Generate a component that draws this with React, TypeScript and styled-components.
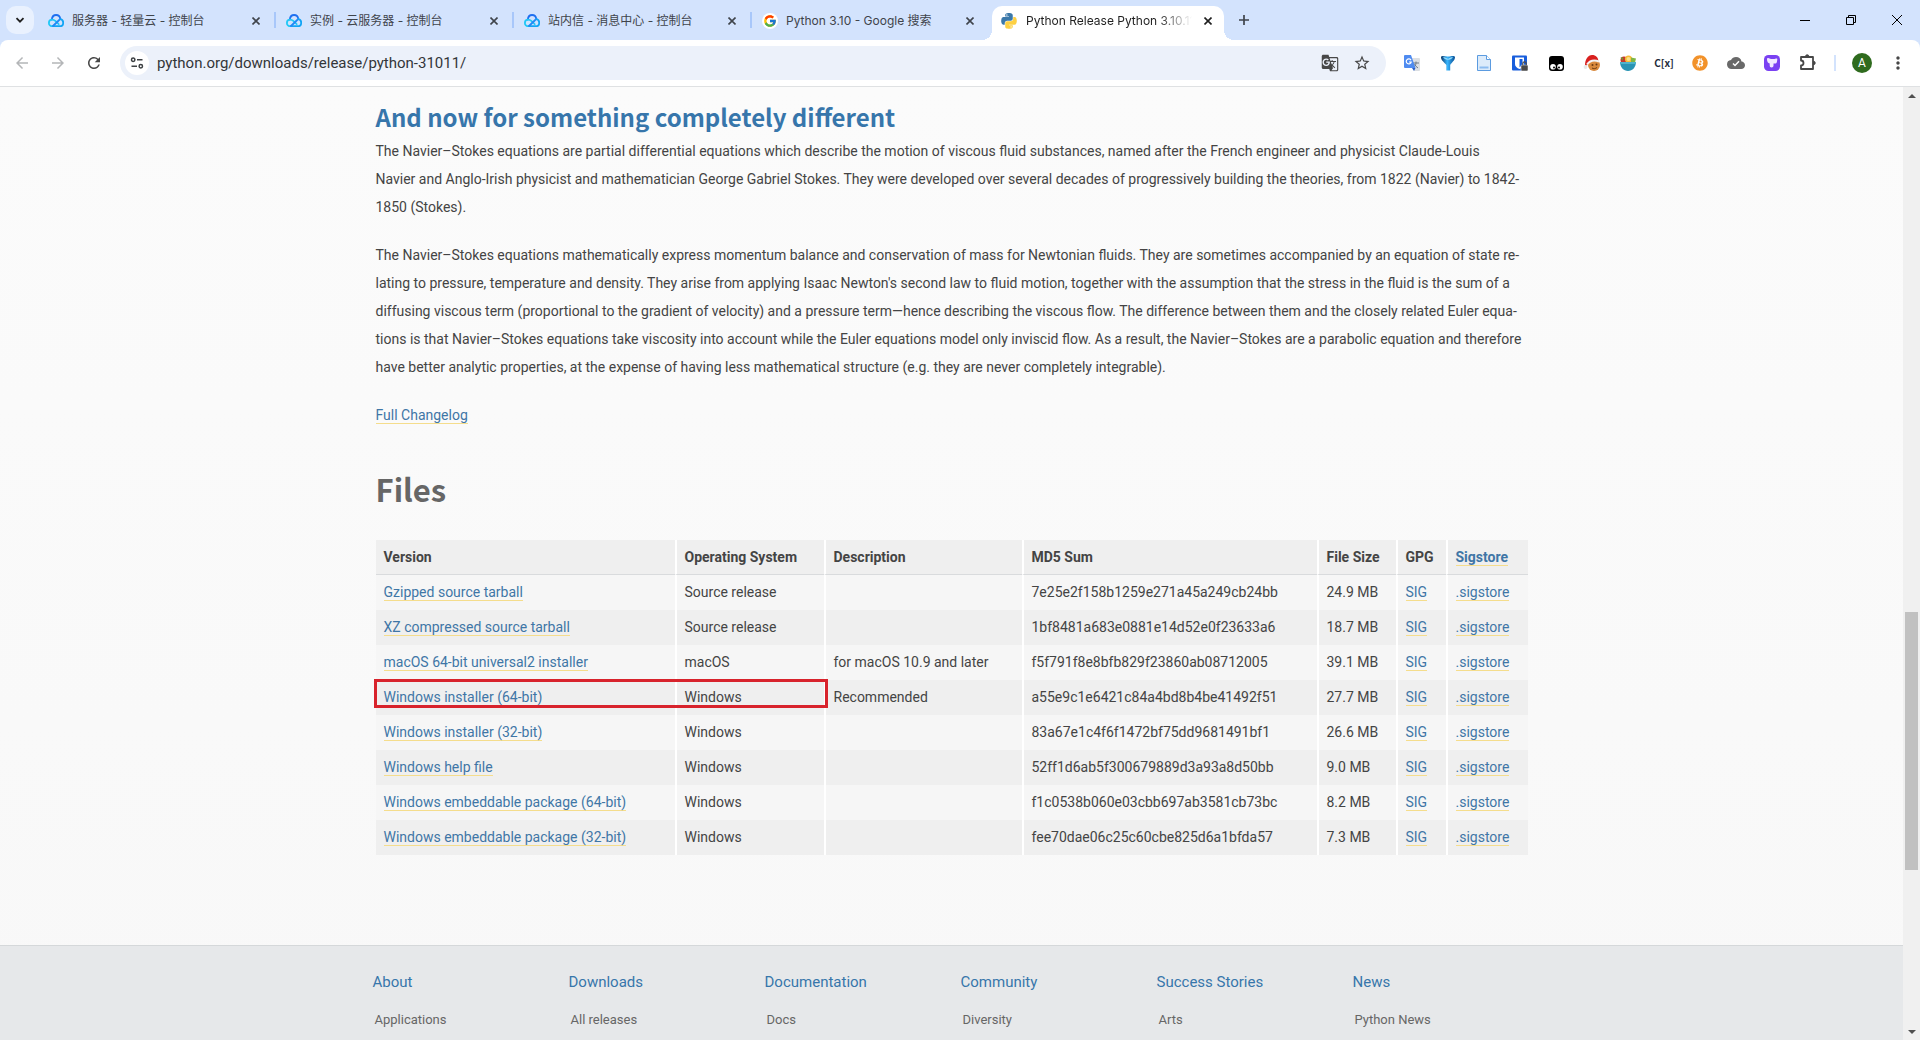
import React from "react";
import styled, { createGlobalStyle } from "styled-components";
import {
  MdArrowBack,
  MdArrowForward,
  MdCloud,
  MdGTranslate,
  MdMoreVert,
  MdRefresh,
  MdStarBorder,
} from "react-icons/md";
import { FcGoogle } from "react-icons/fc";
import { FaBitcoin } from "react-icons/fa";

const uiFont = `Inter, "Noto Sans CJK SC", sans-serif`;
const bodyFont = `Roboto, "Noto Sans CJK SC", sans-serif`;
const headingFont = `"Noto Sans CJK SC", "Noto Sans", sans-serif`;

const GlobalStyle = createGlobalStyle`
  * { box-sizing: border-box; }
  body { margin: 0; background: #fafafa; }
  button { border: 0; padding: 0; margin: 0; background: none; color: inherit; font: inherit; cursor: pointer; }
  svg { display: block; flex: none; }
`;

const Window = styled.div`
  display: flex;
  flex-direction: column;
  height: 100vh;
  overflow: hidden;
  background: #d3e3fd;
  font-family: ${uiFont};
`;

/* ---------- tab strip ---------- */

const TabStrip = styled.header`
  display: flex;
  align-items: flex-end;
  height: 40px;
  flex: none;
  padding-left: 6px;
`;

const TabSearch = styled.button`
  display: grid;
  place-items: center;
  width: 28px;
  height: 28px;
  margin: 0 6px 6px 0;
  border-radius: 10px;
  background: #e9f1fe;
  color: #1f1f1f;
`;

const TabList = styled.div`
  display: flex;
  gap: 6px;
`;

const Tab = styled.div<{ $active?: boolean; $divider?: boolean }>`
  position: relative;
  display: flex;
  align-items: center;
  gap: 8px;
  width: 232px;
  height: 34px;
  padding: 0 8px 4px;
  border-radius: 10px 10px 0 0;
  background: ${(p) => (p.$active ? "#fff" : "transparent")};
  color: ${(p) => (p.$active ? "#1f1f1f" : "#3f444b")};

  &::before,
  &::after {
    content: "";
    display: ${(p) => (p.$active ? "block" : "none")};
    position: absolute;
    bottom: 0;
    width: 10px;
    height: 10px;
  }
  &::before {
    left: -10px;
    background: radial-gradient(circle at 0 0, transparent 10px, #fff 10px);
  }
  &::after {
    right: -10px;
    background: radial-gradient(circle at 100% 0, transparent 10px, #fff 10px);
  }
  ${(p) =>
    p.$divider &&
    `&::after {
      display: block;
      right: -4px;
      bottom: 12px;
      width: 2px;
      height: 16px;
      background: #a8c7fa;
    }`}
`;

const TabTitle = styled.button<{ $fade?: boolean }>`
  flex: 1;
  min-width: 0;
  overflow: hidden;
  white-space: nowrap;
  text-align: left;
  font-size: 12px;
  line-height: 20px;
  mask-image: ${(p) => (p.$fade ? "linear-gradient(to right, #000 80%, transparent)" : "none")};
`;

const TabClose = styled.button`
  display: grid;
  place-items: center;
  width: 16px;
  height: 16px;
`;

const NewTab = styled.button`
  display: grid;
  place-items: center;
  width: 28px;
  height: 28px;
  margin: 0 0 6px 6px;
  color: #3f444b;
`;

const WindowControls = styled.div`
  display: flex;
  margin-left: auto;
  align-self: stretch;
`;

const WindowButton = styled.button`
  display: grid;
  place-items: center;
  width: 46px;
  height: 40px;
`;

/* ---------- toolbar ---------- */

const Toolbar = styled.div`
  display: flex;
  align-items: center;
  flex: none;
  height: 47px;
  padding: 0 4px;
  border-bottom: 1px solid #dfe1e3;
  border-radius: 8px 8px 0 0;
  background: #fff;
`;

const ToolButton = styled.button<{ $muted?: boolean }>`
  display: grid;
  place-items: center;
  flex: none;
  width: 36px;
  height: 34px;
  color: ${(p) => (p.$muted ? "#b4b6b8" : "#474747")};
`;

const Omnibox = styled.form`
  display: flex;
  align-items: center;
  flex: 1;
  min-width: 0;
  height: 34px;
  margin: 0 8px;
  padding: 0 8px 0 5px;
  border-radius: 17px;
  background: #ecf1fa;
`;

const SiteInfo = styled.button`
  display: grid;
  place-items: center;
  width: 24px;
  height: 24px;
  border-radius: 50%;
  background: #fff;
`;

const Address = styled.input`
  flex: 1;
  min-width: 0;
  border: 0;
  outline: 0;
  padding: 0 8px;
  background: transparent;
  color: #333639;
  font: 15px/20px ${bodyFont};
`;

const OmniButton = styled.button`
  display: grid;
  place-items: center;
  width: 32px;
  height: 32px;
  color: #474747;
`;

const ToolDivider = styled.span`
  width: 2px;
  height: 16px;
  margin: 0 8px;
  background: #d3e3fd;
`;

const Avatar = styled.span`
  display: grid;
  place-items: center;
  width: 20px;
  height: 20px;
  border-radius: 50%;
  background: #2f6b1e;
  color: #fff;
  font: 12px/20px ${bodyFont};
`;

const FormulaMark = styled.span`
  color: #1d2b3a;
  font: 700 10px/16px ${headingFont};
`;

/* ---------- page ---------- */

const Viewport = styled.div`
  display: flex;
  flex: 1;
  min-height: 0;
`;

const Page = styled.div`
  flex: 1;
  min-width: 0;
  overflow: hidden;
  background: linear-gradient(#fbfbfb, #f8f8f8);
  color: #444;
  font: 14px/28px ${bodyFont};
`;

const Article = styled.main`
  max-width: 1152px;
  margin: 0 auto;
  padding: 14px 0 90px;
`;

const SubHeading = styled.h2`
  margin: 0 0 4px;
  color: #3776ab;
  font: 700 24px/32px ${headingFont};
`;

const Paragraph = styled.p`
  margin: 0 0 20px;
`;

const FilesHeading = styled.h1`
  margin: 40px 0 31px;
  color: #666;
  font: 700 31px/40px ${headingFont};
`;

const Link = styled.a`
  border-bottom: 1px solid #f5dd8c;
  color: #3f76a6;
  text-decoration: none;
`;

const FilesTable = styled.table`
  width: 100%;
  border-collapse: separate;
  border-spacing: 0;
  table-layout: fixed;
  line-height: 20px;
`;

const Col = styled.col<{ $width?: number }>`
  width: ${(p) => (p.$width ? `${p.$width}px` : "auto")};
`;

const HeadCell = styled.th`
  height: 35px;
  padding: 0 8px;
  border-bottom: 1px solid #d9dbdd;
  background: #efefef;
  text-align: left;
  font-weight: 700;
  white-space: nowrap;

  & + & {
    border-left: 2px solid #fff;
  }
`;

const Cell = styled.td`
  position: relative;
  height: 35px;
  padding: 0 8px 2px;
  white-space: nowrap;

  & + & {
    border-left: 2px solid #fff;
  }
`;

const Row = styled.tr`
  background: #f6f6f6;

  &:nth-child(even) {
    background: #efefef;
  }
`;

const Highlight = styled.span`
  position: absolute;
  z-index: 1;
  top: -1px;
  left: -2px;
  width: calc(100% + 155px);
  height: 29px;
  border: 3px solid #d8232c;
  pointer-events: none;
`;

const Footer = styled.footer`
  min-height: 300px;
  padding-top: 24px;
  border-top: 1px solid #d5d8da;
  background: #e6e8ea;
`;

const SiteMap = styled.nav`
  display: grid;
  grid-template-columns: repeat(6, 1fr);
  max-width: 1176px;
  margin: 0 auto;
`;

const SiteColumn = styled.div`
  display: flex;
  flex-direction: column;
  align-items: flex-start;
  gap: 16px;
  padding-left: 9px;
`;

const SiteTitle = styled.a`
  color: #3776ab;
  font-size: 15px;
  line-height: 24px;
  text-decoration: none;
`;

const SiteLink = styled.a`
  padding-left: 2px;
  color: #666;
  font-size: 13px;
  line-height: 20px;
  text-decoration: none;
`;

/* ---------- scroll bar ---------- */

const ScrollBar = styled.div`
  display: flex;
  flex-direction: column;
  flex: none;
  width: 17px;
  background: #f0f0f0;
`;

const ScrollButton = styled.button`
  display: grid;
  place-items: center;
  height: 17px;
`;

const ScrollSpace = styled.div<{ $grow: number }>`
  flex: ${(p) => p.$grow} 0 0;
`;

const ScrollThumb = styled.div`
  flex: 258 0 0;
  margin: 0 2px;
  background: #c1c1c1;
`;

/* ---------- drawings ---------- */

const CloudLogo = () => (
  <svg width="16" height="16" viewBox="0 0 16 16" fill="none" strokeWidth="1.8" strokeLinecap="round">
    <path d="M3.8 6.6C4.1 3.6 6 2 8.1 2c2.2 0 3.9 1.5 4.2 3.9" stroke="#1f6ff0" />
    <path d="M12 6.2c1.9.2 3.2 1.7 3.2 3.5 0 2-1.5 3.5-3.5 3.5H4.6" stroke="#12a5f5" />
    <path d="M4.500 13.200C2.400 13.200.9 11.800.9 9.900c0-1.900 1.500-3.300 3.400-3.300 1.300 0 2.100.5 3 1.300l3.400 3.200" stroke="#21c8f6" />
    <path d="M5 13l6.200-6" stroke="#2388f5" />
  </svg>
);

const PythonLogo = () => (
  <svg width="18" height="18" viewBox="5 -1 118 110">
    <path
      fill="#3b78a9"
      d="M63.391 1.988c-4.222.02-8.252.379-11.8 1.007-10.45 1.846-12.346 5.71-12.346 12.837v9.411h24.693v3.137H29.977c-7.176 0-13.46 4.313-15.426 12.521-2.268 9.405-2.368 15.275 0 25.096 1.755 7.311 5.947 12.519 13.124 12.519h8.491V67.234c0-8.151 7.051-15.34 15.426-15.34h24.665c6.866 0 12.346-5.654 12.346-12.548V15.833c0-6.693-5.646-11.72-12.346-12.837-4.244-.706-8.645-1.027-12.866-1.008zM50.037 9.557c2.55 0 4.634 2.117 4.634 4.721 0 2.593-2.083 4.69-4.634 4.69-2.56 0-4.633-2.097-4.633-4.69-.001-2.604 2.073-4.721 4.633-4.721z"
    />
    <path
      fill="#fdd042"
      d="M91.682 28.38v10.966c0 8.5-7.208 15.655-15.426 15.655H51.591c-6.756 0-12.346 5.783-12.346 12.549v23.515c0 6.691 5.818 10.628 12.346 12.547 7.816 2.297 15.312 2.713 24.665 0 6.216-1.801 12.346-5.423 12.346-12.547v-9.412H63.938v-3.138h37.012c7.176 0 9.852-5.005 12.348-12.519 2.578-7.735 2.467-15.174 0-25.096-1.774-7.145-5.161-12.521-12.348-12.521h-9.268zM77.809 87.927c2.561 0 4.634 2.097 4.634 4.692 0 2.602-2.074 4.719-4.634 4.719-2.55 0-4.633-2.117-4.633-4.719 0-2.595 2.083-4.692 4.633-4.692z"
    />
  </svg>
);

const GoogleLogo = () => (
  <svg width="16" height="16" viewBox="0 0 16 16">
    <circle cx="8" cy="8" r="8" fill="#fff" />
    <FcGoogle x="1" y="1" size={14} />
  </svg>
);

const CrossIcon = () => (
  <svg width="8" height="8" viewBox="0 0 8 8" stroke="currentColor" strokeWidth="1.6">
    <path d="M.5.5l7 7M7.5.5l-7 7" />
  </svg>
);

const ChevronIcon = () => (
  <svg width="10" height="10" viewBox="0 0 10 10" fill="none" stroke="currentColor" strokeWidth="1.8">
    <path d="M1.500 3.200L5 6.700l3.500-3.500" />
  </svg>
);

const PlusIcon = () => (
  <svg width="12" height="12" viewBox="0 0 12 12" stroke="currentColor" strokeWidth="1.7">
    <path d="M6 1v10M1 6h10" />
  </svg>
);

const TuneIcon = () => (
  <svg width="14" height="14" viewBox="0 0 14 14" fill="none" stroke="#3c4043" strokeWidth="1.5">
    <circle cx="3.2" cy="3.8" r="1.7" />
    <path d="M7 3.800h5.500M1.500 10.200H7" />
    <circle cx="10.8" cy="10.2" r="1.7" />
  </svg>
);

const TranslateExt = () => (
  <svg width="18" height="18" viewBox="0 0 18 18">
    <path d="M8 4h8a1 1 0 0 1 1 1v11a1 1 0 0 1-1 1h-5z" fill="#dcdfe3" />
    <path d="M10 9h6M13 7.500V9c0 2-1.500 4-3 5m1.500-4c.8 1.800 2 3 3.500 4" stroke="#6f7b88" fill="none" />
    <path d="M2 1h6l4.500 13H2a1 1 0 0 1-1-1V2a1 1 0 0 1 1-1z" fill="#4f8bf0" />
    <path d="M11 17l-2-3h3.500z" fill="#2b5fc4" />
    <path d="M8 6.300A2.500 2.500 0 1 0 8.200 8H6" stroke="#fff" strokeWidth="1.2" fill="none" />
  </svg>
);

const FunnelExt = () => (
  <svg width="16" height="18" viewBox="0 0 16 18">
    <defs>
      <linearGradient id="funnel">
        <stop offset="0" stopColor="#0b3566" />
        <stop offset=".45" stopColor="#38b6ff" />
        <stop offset="1" stopColor="#0a4f94" />
      </linearGradient>
    </defs>
    <path
      d="M1 3.200C1 1.400 4 1.800 8 2.600c4-.8 7-1.200 7 .6 0 3-3.300 5.300-4.800 7.800V16.500H6.400V11C4.500 8.500 1 6.200 1 3.200z"
      fill="url(#funnel)"
    />
    <path d="M3 3.200c2 0 3.800.6 5 1.800 1.200-1.200 3-1.800 5-1.800-1.500 1.800-3.500 2.600-5 2.600S4.500 5 3 3.200z" fill="#8fdcff" />
  </svg>
);

const PageExt = () => (
  <svg width="14" height="16" viewBox="0 0 14 16" fill="#dcebfa" stroke="#5b9be0">
    <path d="M.5.5h9l4 4v11H.5z" />
    <path d="M9.500.5v4h4" fill="#fff" />
    <path d="M2.500 11.500h9v2h-9z" fill="#8dbcf0" stroke="none" />
  </svg>
);

const ShieldExt = () => (
  <svg width="18" height="17" viewBox="0 0 18 17">
    <rect x="1" y="0.5" width="15" height="15" rx="1" fill="#175ddc" />
    <path d="M4 2.500h9v6.500c0 2.500-2 4-4.500 5C6 13 4 11.500 4 9z" fill="#fff" />
    <path d="M8.500 4h3v5c0 1.500-1.500 2.500-3 3.200z" fill="#175ddc" />
    <rect x="10" y="10" width="7" height="6" rx="1" fill="#4a4a4a" stroke="#fff" strokeWidth=".5" />
    <path d="M11.800 10V8.500a1.700 1.700 0 0 1 3.400 0V10" fill="none" stroke="#4a4a4a" strokeWidth="1.2" />
  </svg>
);

const MonkeyExt = () => (
  <svg width="15" height="15" viewBox="0 0 15 15">
    <rect width="15" height="15" rx="3" fill="#000" />
    <circle cx="4" cy="10.8" r="2.8" fill="#fff" />
    <circle cx="11" cy="10.8" r="2.8" fill="#fff" />
    <circle cx="5" cy="11.5" r="1" />
    <circle cx="10" cy="11.5" r="1" />
  </svg>
);

const SantaExt = () => (
  <svg width="18" height="18" viewBox="0 0 18 18">
    <circle cx="11" cy="11" r="6" fill="#d98a3d" />
    <circle cx="9.5" cy="11" r="1" fill="#6b3a12" />
    <circle cx="13.5" cy="10.5" r="1" fill="#6b3a12" />
    <path d="M9 14c1.500 1 3.500.8 5-.5" stroke="#6b3a12" fill="none" />
    <path d="M2 12C2 5 5 1 9 1c4 0 6 2.500 6.500 6C11 5.500 7 7 4.500 11z" fill="#d9201f" />
    <path d="M4 10.500C6.500 7 11 5.500 16 7.500" stroke="#f4f4f4" strokeWidth="2" fill="none" />
    <circle cx="2.5" cy="13" r="1.9" fill="#e8e8e8" />
  </svg>
);

const BowlExt = () => (
  <svg width="18" height="18" viewBox="0 0 18 18">
    <circle cx="5" cy="6" r="3.5" fill="#c8352b" />
    <path d="M1.500 3l3 1-1 3z" fill="#6d9a32" />
    <circle cx="9.5" cy="5" r="3.6" fill="#f6bb36" />
    <circle cx="9.5" cy="5" r="2" fill="#fbe08a" />
    <path d="M12 3.500l5 1-1 4h-4z" fill="#7fb743" />
    <path d="M1 8h16c0 5-3.500 9-8 9s-8-4-8-9z" fill="#2a94b4" />
    <path d="M1 8h16l-.5 2h-15z" fill="#4fb3cc" />
  </svg>
);

const CloudCheckExt = () => (
  <svg width="18" height="18" viewBox="0 0 18 18">
    <MdCloud size={18} color="#696969" />
    <path d="M6 9.500l2 2 4-4.300" stroke="#fff" strokeWidth="1.5" fill="none" />
  </svg>
);

const PurpleExt = () => (
  <svg width="16" height="16" viewBox="0 0 16 16">
    <rect width="16" height="16" rx="4.5" fill="#7a41f2" />
    <path
      d="M3 4.200c0-1 .8-1.400 1.800-1l2.200.9h3.500l1.500-.6c.9-.3 1.500.3 1.300 1.200l-.5 2.500c-.2.900-.8 1.400-1.700 1.400H9.500v1.900c0 1.300-.7 2-1.900 2-1.300 0-1.900-.7-1.900-2V8.500C4 8.200 3 6.500 3 4.200z"
      fill="#f1eaff"
    />
  </svg>
);

const PuzzleIcon = () => (
  <svg width="18" height="20" viewBox="0 0 18 20" fill="none" stroke="#474747" strokeWidth="1.8" strokeLinejoin="round">
    <path d="M2 4h12v12H2v-3.500a2.400 2.400 0 0 0 0-5z" />
    <path d="M6.500 3.500a1.700 1.700 0 0 1 3.400 0zM14.500 8.300a1.700 1.700 0 0 1 0 3.400z" fill="#474747" strokeWidth="1" />
  </svg>
);

const TriangleIcon = ({ down }: { down?: boolean }) => (
  <svg width="8" height="4" viewBox="0 0 8 4" fill="#505050">
    <path d={down ? "M0 0h8L4 4z" : "M0 4h8L4 0z"} />
  </svg>
);

/* ---------- data ---------- */

const tabs = [
  { title: "服务器 - 轻量云 - 控制台", icon: <CloudLogo /> },
  { title: "实例 - 云服务器 - 控制台", icon: <CloudLogo /> },
  { title: "站内信 - 消息中心 - 控制台", icon: <CloudLogo /> },
  { title: "Python 3.10 - Google 搜索", icon: <GoogleLogo /> },
  { title: "Python Release Python 3.10.11", icon: <PythonLogo /> },
];

const extensions: [string, React.ReactNode][] = [
  ["Translate", <TranslateExt />],
  ["Filter", <FunnelExt />],
  ["Notes", <PageExt />],
  ["Passwords", <ShieldExt />],
  ["Scripts", <MonkeyExt />],
  ["Cookies", <SantaExt />],
  ["Bowl", <BowlExt />],
  ["Formula", <FormulaMark>C[x]</FormulaMark>],
  ["Bitcoin", <FaBitcoin size={16} color="#f2922a" />],
  ["Cloud", <CloudCheckExt />],
  ["Wallet", <PurpleExt />],
  ["Extensions", <PuzzleIcon />],
];

const columns: { label: string; width?: number }[] = [
  { label: "Version" },
  { label: "Operating System", width: 149 },
  { label: "Description", width: 198 },
  { label: "MD5 Sum", width: 295 },
  { label: "File Size", width: 79 },
  { label: "GPG", width: 50 },
  { label: "Sigstore", width: 82 },
];

const files = [
  { name: "Gzipped source tarball", os: "Source release", note: "", md5: "7e25e2f158b1259e271a45a249cb24bb", size: "24.9 MB" },
  { name: "XZ compressed source tarball", os: "Source release", note: "", md5: "1bf8481a683e0881e14d52e0f23633a6", size: "18.7 MB" },
  { name: "macOS 64-bit universal2 installer", os: "macOS", note: "for macOS 10.9 and later", md5: "f5f791f8e8bfb829f23860ab08712005", size: "39.1 MB" },
  { name: "Windows installer (64-bit)", os: "Windows", note: "Recommended", md5: "a55e9c1e6421c84a4bd8b4be41492f51", size: "27.7 MB", marked: true },
  { name: "Windows installer (32-bit)", os: "Windows", note: "", md5: "83a67e1c4f6f1472bf75dd9681491bf1", size: "26.6 MB" },
  { name: "Windows help file", os: "Windows", note: "", md5: "52ff1d6ab5f300679889d3a93a8d50bb", size: "9.0 MB" },
  { name: "Windows embeddable package (64-bit)", os: "Windows", note: "", md5: "f1c0538b060e03cbb697ab3581cb73bc", size: "8.2 MB" },
  { name: "Windows embeddable package (32-bit)", os: "Windows", note: "", md5: "fee70dae06c25c60cbe825d6a1bfda57", size: "7.3 MB" },
];

const siteMap = [
  ["About", "Applications"],
  ["Downloads", "All releases"],
  ["Documentation", "Docs"],
  ["Community", "Diversity"],
  ["Success Stories", "Arts"],
  ["News", "Python News"],
];

/* ---------- sections ---------- */

const BrowserTabs = () => (
  <TabStrip>
    <TabSearch aria-label="Search tabs">
      <ChevronIcon />
    </TabSearch>
    <TabList>
      {tabs.map((tab, i) => (
        <Tab key={tab.title} $active={i === 4} $divider={i < 3}>
          {tab.icon}
          <TabTitle $fade={i === 4}>{tab.title}</TabTitle>
          <TabClose aria-label="Close tab">
            <CrossIcon />
          </TabClose>
        </Tab>
      ))}
    </TabList>
    <NewTab aria-label="New tab">
      <PlusIcon />
    </NewTab>
    <WindowControls>
      <WindowButton aria-label="Minimize">
        <svg width="10" height="10" viewBox="0 0 10 10" stroke="#000">
          <path d="M0 5.500h10" />
        </svg>
      </WindowButton>
      <WindowButton aria-label="Restore">
        <svg width="10" height="10" viewBox="0 0 10 10" fill="none" stroke="#000">
          <path d="M.5 2.500h7v7h-7zM2.500 2.500v-2h7v7h-2" />
        </svg>
      </WindowButton>
      <WindowButton aria-label="Close">
        <svg width="10" height="10" viewBox="0 0 10 10" stroke="#000">
          <path d="M0 0l10 10M10 0L0 10" />
        </svg>
      </WindowButton>
    </WindowControls>
  </TabStrip>
);

const BrowserToolbar = () => (
  <Toolbar>
    <ToolButton $muted aria-label="Back">
      <MdArrowBack size={18} />
    </ToolButton>
    <ToolButton $muted aria-label="Forward">
      <MdArrowForward size={18} />
    </ToolButton>
    <ToolButton aria-label="Reload">
      <MdRefresh size={18} />
    </ToolButton>
    <Omnibox>
      <SiteInfo type="button" aria-label="Site information">
        <TuneIcon />
      </SiteInfo>
      <Address aria-label="Address" defaultValue="python.org/downloads/release/python-31011/" />
      <OmniButton type="button" aria-label="Translate this page">
        <MdGTranslate size={18} />
      </OmniButton>
      <OmniButton type="button" aria-label="Bookmark this page">
        <MdStarBorder size={18} />
      </OmniButton>
    </Omnibox>
    {extensions.map(([name, icon]) => (
      <ToolButton key={name} aria-label={name}>
        {icon}
      </ToolButton>
    ))}
    <ToolDivider />
    <ToolButton aria-label="Profile">
      <Avatar>A</Avatar>
    </ToolButton>
    <ToolButton aria-label="Menu">
      <MdMoreVert size={20} />
    </ToolButton>
  </Toolbar>
);

const FilesList = () => (
  <FilesTable>
    <colgroup>
      {columns.map((c) => (
        <Col key={c.label} $width={c.width} />
      ))}
    </colgroup>
    <thead>
      <tr>
        {columns.map((c) => (
          <HeadCell key={c.label} scope="col">
            {c.label === "Sigstore" ? <Link href="#sigstore">{c.label}</Link> : c.label}
          </HeadCell>
        ))}
      </tr>
    </thead>
    <tbody>
      {files.map((f) => (
        <Row key={f.name}>
          <Cell>
            <Link href="#file">{f.name}</Link>
            {f.marked && <Highlight />}
          </Cell>
          <Cell>{f.os}</Cell>
          <Cell>{f.note}</Cell>
          <Cell>{f.md5}</Cell>
          <Cell>{f.size}</Cell>
          <Cell>
            <Link href="#sig">SIG</Link>
          </Cell>
          <Cell>
            <Link href="#sigstore">.sigstore</Link>
          </Cell>
        </Row>
      ))}
    </tbody>
  </FilesTable>
);

export default function App() {
  return (
    <Window>
      <GlobalStyle />
      <BrowserTabs />
      <BrowserToolbar />
      <Viewport>
        <Page>
          <Article>
            <SubHeading>And now for something completely different</SubHeading>
            <Paragraph>
              The Navier–Stokes equations are partial differential equations which describe the motion of viscous fluid
              substances, named after the French engineer and physicist Claude-Louis
              <br />
              Navier and Anglo-Irish physicist and mathematician George Gabriel Stokes. They were developed over several
              decades of progressively building the theories, from 1822 (Navier) to 1842-
              <br />
              1850 (Stokes).
            </Paragraph>
            <Paragraph>
              The Navier–Stokes equations mathematically express momentum balance and conservation of mass for Newtonian
              fluids. They are sometimes accompanied by an equation of state re-
              <br />
              lating to pressure, temperature and density. They arise from applying Isaac Newton's second law to fluid
              motion, together with the assumption that the stress in the fluid is the sum of a
              <br />
              diffusing viscous term (proportional to the gradient of velocity) and a pressure term—hence describing the
              viscous flow. The difference between them and the closely related Euler equa-
              <br />
              tions is that Navier–Stokes equations take viscosity into account while the Euler equations model only
              inviscid flow. As a result, the Navier–Stokes are a parabolic equation and therefore
              <br />
              have better analytic properties, at the expense of having less mathematical structure (e.g. they are never
              completely integrable).
            </Paragraph>
            <Paragraph>
              <Link href="#changelog">Full Changelog</Link>
            </Paragraph>
            <FilesHeading>Files</FilesHeading>
            <FilesList />
          </Article>
          <Footer>
            <SiteMap>
              {siteMap.map(([title, first]) => (
                <SiteColumn key={title}>
                  <SiteTitle href="#section">{title}</SiteTitle>
                  <SiteLink href="#page">{first}</SiteLink>
                </SiteColumn>
              ))}
            </SiteMap>
          </Footer>
        </Page>
        <ScrollBar>
          <ScrollButton aria-label="Scroll up">
            <TriangleIcon />
          </ScrollButton>
          <ScrollSpace $grow={508} />
          <ScrollThumb />
          <ScrollSpace $grow={153} />
          <ScrollButton aria-label="Scroll down">
            <TriangleIcon down />
          </ScrollButton>
        </ScrollBar>
      </Viewport>
    </Window>
  );
}
